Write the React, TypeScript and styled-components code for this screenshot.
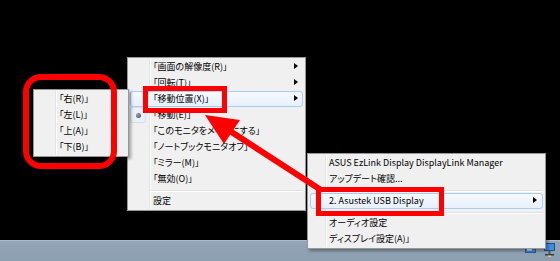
import React from 'react';
import styled, { createGlobalStyle, css } from 'styled-components';

const GlobalStyle = createGlobalStyle`
  html, body {
    margin: 0;
    padding: 0;
    background: #000;
  }
  body {
    font-family: "Noto Sans CJK JP", "Liberation Sans", sans-serif;
  }
`;

const Desktop = styled.div`
  position: relative;
  width: 560px;
  height: 261px;
  background: #000;
  overflow: hidden;
  display: flex;
  flex-direction: column;
`;

const Screen = styled.div`
  flex: 1;
`;

const Taskbar = styled.div`
  height: 21px;
  box-sizing: border-box;
  background: linear-gradient(#93a6b7, #8b9fb1);
  border-top: 1px solid #aebdca;
  display: flex;
  justify-content: flex-end;
  align-items: center;
  gap: 8px;
  padding: 0 5px 2px 0;
`;

const Menu = styled.div<{ $left: number; $top: number; $width: number; $gutter: number }>`
  position: absolute;
  left: ${p => p.$left}px;
  top: ${p => p.$top}px;
  width: ${p => p.$width}px;
  box-sizing: border-box;
  background: #f0f0f0;
  border: 1px solid #979797;
  padding: 1px 2px;
  box-shadow: 2px 2px 3px rgba(0, 0, 0, 0.35);
  z-index: 2;

  &::before {
    content: '';
    position: absolute;
    top: 1px;
    bottom: 1px;
    left: ${p => p.$gutter}px;
    width: 1px;
    background: #e2e3e3;
    box-shadow: 1px 0 0 #fff;
  }
`;

const Item = styled.div<{ $indent: number; $active?: boolean }>`
  position: relative;
  height: 16px;
  line-height: 14px;
  box-sizing: border-box;
  padding-left: ${p => p.$indent}px;
  border: 1px solid transparent;
  border-radius: 3px;
  font-size: 9px;
  font-feature-settings: "palt";
  color: #000;
  white-space: nowrap;

  ${p =>
    p.$active &&
    css`
      border-color: #a9cdee;
      background: linear-gradient(#f5f9fe, #e7f0fb);
    `}
`;

const SubArrow = styled.span<{ $right: number }>`
  position: absolute;
  right: ${p => p.$right}px;
  top: 3px;
  width: 0;
  height: 0;
  border-left: 4px solid #000;
  border-top: 3.5px solid transparent;
  border-bottom: 3.5px solid transparent;
`;

const RadioBox = styled.span`
  position: absolute;
  left: -1px;
  top: -1px;
  width: 14px;
  height: 14px;
  border: 1px solid #d3dfec;
  border-radius: 2px;
  background: #eaf0f7;
  display: flex;
  align-items: center;
  justify-content: center;

  &::after {
    content: '';
    width: 5px;
    height: 5px;
    border-radius: 50%;
    background: radial-gradient(circle at 35% 35%, #9aa4ad, #3c4650);
  }
`;

const Separator = styled.div<{ $gutter: number }>`
  height: 6px;
  display: flex;
  align-items: center;
  padding-left: ${p => p.$gutter}px;

  &::after {
    content: '';
    flex: 1;
    height: 1px;
    background: #e0e0e0;
    box-shadow: 0 1px 0 #fff;
  }
`;

const Overlay = styled.svg`
  position: absolute;
  left: 0;
  top: 0;
  width: 560px;
  height: 261px;
  pointer-events: none;
  z-index: 5;
`;

const TrayIcon = styled.svg`
  display: block;
`;

type Entry = { label: string; sub?: boolean; active?: boolean; radio?: boolean } | 'sep';

const mainEntries: Entry[] = [
  { label: '「画面の解像度(R)」', sub: true },
  { label: '「回転(T)」', sub: true },
  { label: '「移動位置(X)」', sub: true, active: true },
  { label: '「移動(E)」', radio: true },
  { label: '「このモニタをメインにする」' },
  { label: '「ノートブックモニタオフ」' },
  { label: '「ミラー(M)」' },
  { label: '「無効(O)」' },
  'sep',
  { label: '設定' },
];

const positionEntries: Entry[] = [
  { label: '「右(R)」' },
  { label: '「左(L)」' },
  { label: '「上(A)」' },
  { label: '「下(B)」' },
];

const trayEntries: Entry[] = [
  { label: 'ASUS EzLink Display DisplayLink Manager' },
  { label: 'アップデート確認...' },
  'sep',
  { label: '2. Asustek USB Display', sub: true, active: true },
  'sep',
  { label: 'オーディオ設定' },
  { label: 'ディスプレイ設定(A)」' },
];

interface MenuProps {
  left: number;
  top: number;
  width: number;
  gutter: number;
  indent: number;
  arrowRight: number;
  entries: Entry[];
}

const PopupMenu = ({ left, top, width, gutter, indent, arrowRight, entries }: MenuProps) => (
  <Menu $left={left} $top={top} $width={width} $gutter={gutter}>
    {entries.map((e, i) =>
      e === 'sep' ? (
        <Separator key={i} $gutter={gutter - 2} />
      ) : (
        <Item key={i} $indent={indent} $active={e.active}>
          {e.radio && <RadioBox />}
          {e.label}
          {e.sub && <SubArrow $right={arrowRight} />}
        </Item>
      )
    )}
  </Menu>
);

export default function App() {
  return (
    <>
      <GlobalStyle />
      <Desktop>
        <Screen />
        <Taskbar>
          <TrayIcon width="11" height="8" viewBox="0 0 11 8">
            <rect x="0.5" y="0.5" width="10" height="6" fill="#3d8ad6" stroke="#2a5d95" />
            <rect x="2" y="3" width="5" height="1.5" fill="#e8f2fc" />
          </TrayIcon>
          <TrayIcon width="11" height="14" viewBox="0 0 11 14">
            <rect x="0.5" y="0.5" width="10" height="7" fill="#3f8de0" stroke="#22508a" />
            <rect x="4.5" y="8" width="2" height="3" fill="#555" />
            <rect x="1" y="11" width="9" height="1.5" fill="#3a3a3a" />
            <rect x="4" y="12.5" width="3" height="1.5" fill="#e9c46a" />
          </TrayIcon>
        </Taskbar>

        <PopupMenu left={127} top={57} width={179} gutter={21} indent={22} arrowRight={4} entries={mainEntries} />
        <PopupMenu left={33} top={89} width={96} gutter={21} indent={22} arrowRight={4} entries={positionEntries} />
        <PopupMenu left={307} top={153} width={239} gutter={17} indent={18} arrowRight={5} entries={trayEntries} />

        <Overlay viewBox="0 0 560 261">
          <rect x="26" y="77" width="88" height="89" rx="15" fill="none" stroke="#ff0000" strokeWidth="6" />
          <rect x="145.5" y="88.5" width="79" height="22" fill="none" stroke="#ff0000" strokeWidth="5" />
          <rect x="318.5" y="189.5" width="123" height="24" fill="none" stroke="#ff0000" strokeWidth="5" />
          <line x1="230" y1="131" x2="321" y2="190" stroke="#ff0000" strokeWidth="6" />
          <polygon points="205,115 224,144 240,120" fill="#ff0000" />
        </Overlay>
      </Desktop>
    </>
  );
}
